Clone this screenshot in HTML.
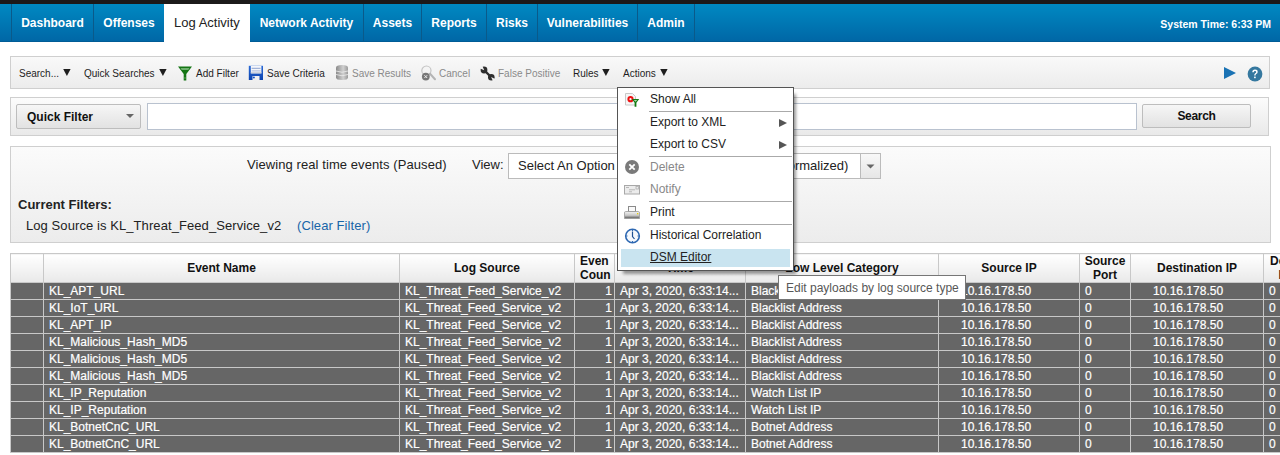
<!DOCTYPE html>
<html><head><meta charset="utf-8">
<style>
*{box-sizing:border-box;margin:0;padding:0}
html,body{width:1280px;height:455px;overflow:hidden;background:#fff;font-family:"Liberation Sans",sans-serif;position:relative}
.abs{position:absolute}
#topstrip{left:0;top:0;width:1280px;height:4px;background:#1c1a1a}
#nav{left:0;top:4px;width:1280px;height:38px;background:linear-gradient(#0089c2,#0067a6);border-bottom:1px solid #005c96}
.tab{position:absolute;top:0;height:37px;color:#fff;font-weight:bold;font-size:12px;line-height:37px;text-align:center;border-left:1px solid #0a5a8a;padding-top:1px}
.tab.sel{background:#fff;color:#222;font-weight:normal;font-size:13px;border-left:none;height:38px;padding-top:0}
#systime{right:9px;top:4px;height:38px;line-height:41px;color:#fff;font-weight:bold;font-size:10.5px}

#toolbar{left:10px;top:56px;width:1260px;height:33px;border:1px solid #cfcfcf;background:linear-gradient(#f9f9f9,#ececec)}
.tb{position:absolute;top:0;height:31px;line-height:31px;font-size:10px;color:#1e1e1e;white-space:nowrap}
.tb.dis{color:#8a8a8a}

#searchpanel{left:10px;top:97px;width:1259px;height:39px;border:1px solid #cfcfcf;background:linear-gradient(#fcfcfc,#e9e9e9)}
#qf{left:16px;top:104px;width:125px;height:25px;border:1px solid #bdbdbd;border-radius:2px;background:linear-gradient(#f6f6f6,#e2e2e2);font-weight:bold;font-size:12px;color:#111;line-height:25px;padding-left:10px}
#qfarrow{left:126px;top:114px;width:0;height:0;border-left:4px solid transparent;border-right:4px solid transparent;border-top:4px solid #666}
#qinput{left:147px;top:103px;width:990px;height:27px;border:1px solid #b9c2cf;background:#fff}
#sbtn{left:1142px;top:104px;width:109px;height:24px;border:1px solid #bdbdbd;border-radius:2px;background:linear-gradient(#f6f6f6,#e2e2e2);font-weight:bold;font-size:12px;letter-spacing:-0.3px;color:#111;line-height:22px;text-align:center}

#viewpanel{left:10px;top:146px;width:1261px;height:97px;border:1px solid #cfcfcf;background:linear-gradient(#fbfbfb,#ececec)}
.t13{font-size:13px;color:#222;white-space:nowrap}

table{border-collapse:collapse;position:absolute;left:10px;top:253px;width:1308px;table-layout:fixed;font-size:12px}
td,th{border:1px solid #c8c8c8;overflow:hidden;white-space:nowrap}
th{height:29px;background:linear-gradient(#ffffff,#e9e9e9);font-weight:bold;color:#111;font-size:12px;line-height:14px;text-align:center;white-space:normal;vertical-align:middle}
td{height:17px;background:#666;color:#fff;line-height:16px;padding:0 5px;-webkit-text-stroke:0.2px #fff}

#menu{left:617px;top:87px;width:177px;height:184px;border:1px solid #555;background:#fff;box-shadow:4px 5px 3px -2px rgba(0,0,0,0.4);padding-top:1px}
.mi{position:relative;height:22px;line-height:21px;padding-left:32px;font-size:12px;color:#222;white-space:nowrap}
.mi.dis{color:#888}
.sep{height:1px;margin-left:31px;margin-right:1px;background:#aaa}
.arrow{position:absolute;left:161px;top:7px;width:0;height:0;border-top:4px solid transparent;border-bottom:4px solid transparent;border-left:8px solid #555}
#hl{left:621px;top:249px;width:169px;height:18px;background:#c9e4f0}

#tip{left:778px;top:275px;width:188px;height:25px;border:1px solid #767676;background:#fff;font-size:12px;color:#575757;line-height:24px;padding-left:7px;white-space:nowrap}
</style></head><body>
<div id="topstrip" class="abs"></div>
<div id="nav" class="abs">
  <div class="tab" style="left:0;width:11px;border-left:none"></div>
  <div class="tab" style="left:11px;width:82px">Dashboard</div>
  <div class="tab" style="left:93px;width:71px">Offenses</div>
  <div class="tab sel" style="left:164px;width:86px">Log Activity</div>
  <div class="tab" style="left:250px;width:113px;border-left:none">Network Activity</div>
  <div class="tab" style="left:363px;width:58px">Assets</div>
  <div class="tab" style="left:421px;width:65px">Reports</div>
  <div class="tab" style="left:486px;width:51px">Risks</div>
  <div class="tab" style="left:537px;width:100px">Vulnerabilities</div>
  <div class="tab" style="left:637px;width:57px">Admin</div>
  <div class="tab" style="left:694px;width:1px"></div>
</div>
<div id="systime" class="abs">System Time: 6:33 PM</div>

<div id="toolbar" class="abs"></div>
<div class="tb abs" style="left:19px;top:58px">Search...</div>
<div class="tb abs" style="left:84px;top:58px">Quick Searches</div>
<div class="tb abs" style="left:196px;top:58px">Add Filter</div>
<div class="tb abs" style="left:267px;top:58px">Save Criteria</div>
<div class="tb abs dis" style="left:352px;top:58px">Save Results</div>
<div class="tb abs dis" style="left:439px;top:58px">Cancel</div>
<div class="tb abs dis" style="left:498px;top:58px">False Positive</div>
<div class="tb abs" style="left:573px;top:58px">Rules</div>
<div class="tb abs" style="left:623px;top:58px">Actions</div>
<svg class="abs" style="left:63px;top:69px" width="8" height="7" viewBox="0 0 8 7"><path d="M0.2 0 L7.6 0 L3.9 7 Z" fill="#1e1e1e"/></svg>
<svg class="abs" style="left:159px;top:69px" width="8" height="7" viewBox="0 0 8 7"><path d="M0.2 0 L7.6 0 L3.9 7 Z" fill="#1e1e1e"/></svg>
<svg class="abs" style="left:602px;top:69px" width="8" height="7" viewBox="0 0 8 7"><path d="M0.2 0 L7.6 0 L3.9 7 Z" fill="#1e1e1e"/></svg>
<svg class="abs" style="left:660px;top:69px" width="8" height="7" viewBox="0 0 8 7"><path d="M0.2 0 L7.6 0 L3.9 7 Z" fill="#1e1e1e"/></svg>
<svg class="abs" style="left:177px;top:65px" width="16" height="17" viewBox="0 0 16 17">
 <path d="M1 1.5 L15 1.5 L9.3 9 L9.3 15.5 L6.7 15.5 L6.7 9 Z" fill="#157515"/>
 <path d="M3.5 3.2 L12.5 3.2 L11.3 4.8 L4.7 4.8 Z" fill="#8cc48c"/>
 <rect x="7.5" y="12" width="1" height="2" fill="#5aa55a"/>
</svg>
<svg class="abs" style="left:248px;top:65px" width="16" height="16" viewBox="0 0 16 16">
 <defs><linearGradient id="flg" x1="0" y1="0" x2="0" y2="1"><stop offset="0" stop-color="#2a6ad6"/><stop offset="1" stop-color="#0c44b0"/></linearGradient></defs>
 <rect x="0.8" y="0.8" width="14.2" height="14.2" fill="url(#flg)"/>
 <rect x="2.8" y="1" width="10.6" height="7.4" fill="#f4f6fa"/>
 <rect x="2.8" y="7.2" width="10.6" height="1.2" fill="#c8ccd6"/>
 <rect x="3.6" y="2.8" width="9" height="1" fill="#8ea2d0"/>
 <rect x="3.6" y="5.4" width="9" height="1" fill="#a8b6da"/>
 <rect x="4.5" y="11" width="7" height="4" fill="#f0f0f0"/>
 <circle cx="5.9" cy="12.6" r="1" fill="#1a55c0"/>
</svg>
<svg class="abs" style="left:335px;top:64px" width="14" height="17" viewBox="0 0 14 17">
 <defs><linearGradient id="dbg" x1="0" x2="1"><stop offset="0" stop-color="#8a8a8a"/><stop offset="0.6" stop-color="#d0d0d0"/><stop offset="1" stop-color="#9a9a9a"/></linearGradient></defs>
 <path d="M1 3.5 Q1 1 7 1 Q13 1 13 3.5 L13 13.5 Q13 16 7 16 Q1 16 1 13.5 Z" fill="url(#dbg)"/>
 <path d="M1 7 Q7 9.5 13 7" stroke="#eee" stroke-width="0.8" fill="none"/>
 <path d="M1 10.5 Q7 13 13 10.5" stroke="#eee" stroke-width="0.8" fill="none"/>
</svg>
<svg class="abs" style="left:420px;top:65px" width="17" height="17" viewBox="0 0 17 17">
 <circle cx="6.4" cy="5.6" r="4.6" fill="none" stroke="#c4c4c4" stroke-width="1.2"/>
 <path d="M10 8.8 L15 14.2" stroke="#b4b4b4" stroke-width="2" stroke-linecap="round"/>
 <circle cx="5.8" cy="11.6" r="3.9" fill="#777"/>
 <path d="M4.4 10.2 L7.2 13 M7.2 10.2 L4.4 13" stroke="#eee" stroke-width="1"/>
</svg>
<svg class="abs" style="left:476px;top:62px" width="24" height="22" viewBox="0 0 24 22">
 <path d="M8.5 8.5 L15 15" stroke="#2e2e2e" stroke-width="2.4"/>
 <circle cx="8" cy="8" r="3.4" fill="#2e2e2e"/>
 <path d="M8.2 8.2 L3.6 6.2 L6.2 3.6 Z" fill="#f4f4f4"/>
 <circle cx="15.3" cy="15.3" r="3.3" fill="#2e2e2e"/>
 <path d="M15.1 15.1 L19.6 17.2 L17.2 19.6 Z" fill="#f1f1f1"/>
</svg>
<svg class="abs" style="left:1224px;top:67px" width="12" height="12" viewBox="0 0 12 12">
 <path d="M0 0 L12 6 L0 12 Z" fill="#1a72b4"/>
</svg>
<svg class="abs" style="left:1247px;top:66px" width="16" height="16" viewBox="0 0 16 16">
 <circle cx="8" cy="8" r="7.4" fill="#35789f"/>
 <path d="M5.3 6.2 Q5.3 3.6 8 3.6 Q10.7 3.6 10.7 6 Q10.7 7.3 9.2 8 Q8.6 8.4 8.6 9.6 L7.2 9.6 Q7.2 8 8.2 7.3 Q9.2 6.7 9.2 6 Q9.2 5 8 5 Q6.8 5 6.8 6.2 Z" fill="#fff"/>
 <rect x="7.1" y="10.6" width="1.6" height="1.6" fill="#fff"/>
</svg>

<div id="searchpanel" class="abs"></div>
<div id="qf" class="abs">Quick Filter</div>
<div id="qfarrow" class="abs"></div>
<div id="qinput" class="abs"></div>
<div id="sbtn" class="abs">Search</div>

<div id="viewpanel" class="abs"></div>
<div class="abs t13" style="left:247px;top:157px;letter-spacing:0.08px">Viewing real time events (Paused)</div>
<div class="abs t13" style="left:472px;top:157px">View:</div>
<div class="abs" style="left:508px;top:153px;width:373px;height:26px;border:1px solid #bbb;background:#fff"></div>
<div class="abs t13" style="left:518px;top:158px">Select An Option</div>
<div class="abs t13" style="left:774px;top:158px">(Normalized)</div>
<div class="abs" style="left:860px;top:154px;width:20px;height:24px;border-left:1px solid #bbb;background:linear-gradient(#f8f8f8,#e6e6e6)"></div>
<svg class="abs" style="left:866px;top:164px" width="9" height="5" viewBox="0 0 9 5"><path d="M0.5 0.5 L8.5 0.5 L4.5 4.5 Z" fill="#666"/></svg>
<div class="abs t13" style="left:18px;top:197px;font-weight:bold">Current Filters:</div>
<div class="abs t13" style="left:26px;top:218px;letter-spacing:0.08px">Log Source is KL_Threat_Feed_Service_v2</div>
<div class="abs t13" style="left:297px;top:218px;color:#1865a8;letter-spacing:0.08px">(Clear Filter)</div>

<table>
<colgroup><col style="width:33px"><col style="width:356px"><col style="width:175px"><col style="width:40px"><col style="width:131px"><col style="width:193px"><col style="width:141px"><col style="width:51px"><col style="width:133px"><col style="width:54px"></colgroup>
<tr><th></th><th>Event Name</th><th>Log Source</th><th style="text-align:left;padding-left:5px">Even<br>Coun</th><th>Time</th><th>Low Level Category</th><th>Source IP</th><th>Source Port</th><th>Destination IP</th><th style="padding:0 6px">Destination<br>Port</th></tr>
<tr><td></td><td>KL_APT_URL</td><td>KL_Threat_Feed_Service_v2</td><td style="text-align:right;padding-right:2px">1</td><td>Apr 3, 2020, 6:33:14...</td><td>Blacklist Address</td><td style="padding-left:22px">10.16.178.50</td><td style="padding-left:5px">0</td><td style="padding-left:22px">10.16.178.50</td><td>0</td></tr>
<tr><td></td><td>KL_IoT_URL</td><td>KL_Threat_Feed_Service_v2</td><td style="text-align:right;padding-right:2px">1</td><td>Apr 3, 2020, 6:33:14...</td><td>Blacklist Address</td><td style="padding-left:22px">10.16.178.50</td><td style="padding-left:5px">0</td><td style="padding-left:22px">10.16.178.50</td><td>0</td></tr>
<tr><td></td><td>KL_APT_IP</td><td>KL_Threat_Feed_Service_v2</td><td style="text-align:right;padding-right:2px">1</td><td>Apr 3, 2020, 6:33:14...</td><td>Blacklist Address</td><td style="padding-left:22px">10.16.178.50</td><td style="padding-left:5px">0</td><td style="padding-left:22px">10.16.178.50</td><td>0</td></tr>
<tr><td></td><td>KL_Malicious_Hash_MD5</td><td>KL_Threat_Feed_Service_v2</td><td style="text-align:right;padding-right:2px">1</td><td>Apr 3, 2020, 6:33:14...</td><td>Blacklist Address</td><td style="padding-left:22px">10.16.178.50</td><td style="padding-left:5px">0</td><td style="padding-left:22px">10.16.178.50</td><td>0</td></tr>
<tr><td></td><td>KL_Malicious_Hash_MD5</td><td>KL_Threat_Feed_Service_v2</td><td style="text-align:right;padding-right:2px">1</td><td>Apr 3, 2020, 6:33:14...</td><td>Blacklist Address</td><td style="padding-left:22px">10.16.178.50</td><td style="padding-left:5px">0</td><td style="padding-left:22px">10.16.178.50</td><td>0</td></tr>
<tr><td></td><td>KL_Malicious_Hash_MD5</td><td>KL_Threat_Feed_Service_v2</td><td style="text-align:right;padding-right:2px">1</td><td>Apr 3, 2020, 6:33:14...</td><td>Blacklist Address</td><td style="padding-left:22px">10.16.178.50</td><td style="padding-left:5px">0</td><td style="padding-left:22px">10.16.178.50</td><td>0</td></tr>
<tr><td></td><td>KL_IP_Reputation</td><td>KL_Threat_Feed_Service_v2</td><td style="text-align:right;padding-right:2px">1</td><td>Apr 3, 2020, 6:33:14...</td><td>Watch List IP</td><td style="padding-left:22px">10.16.178.50</td><td style="padding-left:5px">0</td><td style="padding-left:22px">10.16.178.50</td><td>0</td></tr>
<tr><td></td><td>KL_IP_Reputation</td><td>KL_Threat_Feed_Service_v2</td><td style="text-align:right;padding-right:2px">1</td><td>Apr 3, 2020, 6:33:14...</td><td>Watch List IP</td><td style="padding-left:22px">10.16.178.50</td><td style="padding-left:5px">0</td><td style="padding-left:22px">10.16.178.50</td><td>0</td></tr>
<tr><td></td><td>KL_BotnetCnC_URL</td><td>KL_Threat_Feed_Service_v2</td><td style="text-align:right;padding-right:2px">1</td><td>Apr 3, 2020, 6:33:14...</td><td>Botnet Address</td><td style="padding-left:22px">10.16.178.50</td><td style="padding-left:5px">0</td><td style="padding-left:22px">10.16.178.50</td><td>0</td></tr>
<tr><td></td><td>KL_BotnetCnC_URL</td><td>KL_Threat_Feed_Service_v2</td><td style="text-align:right;padding-right:2px">1</td><td>Apr 3, 2020, 6:33:14...</td><td>Botnet Address</td><td style="padding-left:22px">10.16.178.50</td><td style="padding-left:5px">0</td><td style="padding-left:22px">10.16.178.50</td><td>0</td></tr>
</table>

<div id="menu" class="abs">
  <div class="mi">Show All</div>
  <div class="sep"></div>
  <div class="mi">Export to XML<span class="arrow"></span></div>
  <div class="mi">Export to CSV<span class="arrow"></span></div>
  <div class="sep"></div>
  <div class="mi dis">Delete</div>
  <div class="mi dis">Notify</div>
  <div class="sep"></div>
  <div class="mi">Print</div>
  <div class="sep"></div>
  <div class="mi">Historical Correlation</div>
  <div class="mi"><div style="position:absolute;left:3px;top:2px;width:169px;height:18px;background:#c9e4f0"></div><span style="position:relative;text-decoration:underline">DSM Editor</span></div>
</div>


<svg class="abs" style="left:624px;top:92px" width="17" height="16" viewBox="0 0 17 16">
 <path d="M1.5 1.5 L8.5 1.5 L11.5 4.5 L11.5 13 L1.5 13 Z" fill="#f6f6f6" stroke="#c8c8c8" stroke-width="1"/>
 <circle cx="6.5" cy="7.2" r="2.1" fill="none" stroke="#ee1111" stroke-width="2"/>
 <path d="M7.8 7 L15.2 7 L12.4 10.8 L12.4 14.8 L10.6 14.8 L10.6 10.8 Z" fill="#117a11"/>
 <path d="M9.8 8 L13.2 8 L11.5 9.8 Z" fill="#a8d8a8"/>
</svg>
<svg class="abs" style="left:624px;top:159px" width="16" height="16" viewBox="0 0 16 16">
 <circle cx="8" cy="8" r="7" fill="#7a7a7a"/>
 <path d="M5.3 5.3 L10.7 10.7 M10.7 5.3 L5.3 10.7" stroke="#fff" stroke-width="1.8"/>
</svg>
<svg class="abs" style="left:624px;top:185px" width="16" height="10" viewBox="0 0 16 10">
 <rect x="0.5" y="0.5" width="15" height="8.5" fill="#ececec" stroke="#a8a8a8"/>
 <rect x="2" y="2" width="3" height="1" fill="#b8b8b8"/>
 <rect x="5" y="4.3" width="6" height="1" fill="#b8b8b8"/>
 <rect x="5" y="6.3" width="3" height="1" fill="#b8b8b8"/>
 <rect x="12" y="1.5" width="2.5" height="2.5" fill="none" stroke="#b0b0b0" stroke-width="0.8"/>
</svg>
<svg class="abs" style="left:624px;top:205px" width="16" height="15" viewBox="0 0 16 15">
 <defs><linearGradient id="prg" x1="0" y1="0" x2="0" y2="1"><stop offset="0" stop-color="#f4f4f4"/><stop offset="0.55" stop-color="#c8c8c8"/><stop offset="1" stop-color="#555"/></linearGradient></defs>
 <rect x="4.5" y="1.5" width="7" height="5" fill="#fafafa" stroke="#8a8a8a"/>
 <path d="M1.5 6.5 L14.5 6.5 Q15.5 6.5 15.5 8 L15.5 13.5 L0.5 13.5 L0.5 8 Q0.5 6.5 1.5 6.5 Z" fill="url(#prg)" stroke="#9a9a9a" stroke-width="0.8"/>
 <rect x="13" y="8" width="1.3" height="1.3" fill="#e8d000"/>
</svg>
<svg class="abs" style="left:624px;top:228px" width="17" height="17" viewBox="0 0 17 17">
 <circle cx="8.5" cy="8" r="6.8" fill="#f4f8fd" stroke="#2e68b2" stroke-width="1.6"/>
 <path d="M8.5 3.5 L8.5 8.5 L10.5 11" stroke="#1d4f93" stroke-width="1.2" fill="none"/>
 <path d="M8.5 1.8 L8.5 3 M8.5 13 L8.5 14.2 M2.3 8 L3.5 8 M13.5 8 L14.7 8" stroke="#2e68b2" stroke-width="1"/>
</svg>

<div id="tip" class="abs">Edit payloads by log source type</div>
</body></html>
